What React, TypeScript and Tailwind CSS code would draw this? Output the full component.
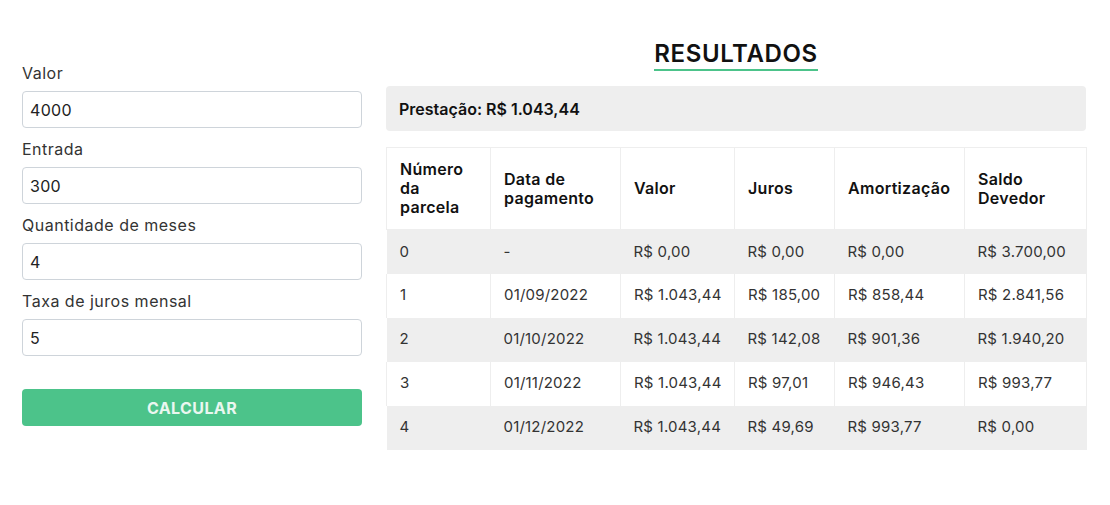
import React from "react";

const rows = [
  ["0", "-", "R$ 0,00", "R$ 0,00", "R$ 0,00", "R$ 3.700,00"],
  ["1", "01/09/2022", "R$ 1.043,44", "R$ 185,00", "R$ 858,44", "R$ 2.841,56"],
  ["2", "01/10/2022", "R$ 1.043,44", "R$ 142,08", "R$ 901,36", "R$ 1.940,20"],
  ["3", "01/11/2022", "R$ 1.043,44", "R$ 97,01", "R$ 946,43", "R$ 993,77"],
  ["4", "01/12/2022", "R$ 1.043,44", "R$ 49,69", "R$ 993,77", "R$ 0,00"],
];

const fields = [
  ["Valor", "4000"],
  ["Entrada", "300"],
  ["Quantidade de meses", "4"],
  ["Taxa de juros mensal", "5"],
];

const widths = ["w-[104px]", "w-[130px]", "w-[114px]", "w-[100px]", "w-[130px]", "w-[122px]"];

export default function App() {
  return (
    <div className="w-[1110px] h-[505px] bg-white text-[#222] font-['Inter',sans-serif] flex gap-[24px] px-[22px] pt-[40px]">
      <div className="w-[340px] flex flex-col pt-[22px]">
        {fields.map(([l, v]) => (
          <div key={l} className="flex flex-col">
            <label className="text-[16px] tracking-[0.5px] leading-[22px] h-[29px] text-[#333]">{l}</label>
            <div className="h-[37px] border border-[#ced4da] rounded-[4px] flex items-center px-[7px] text-[16px] tracking-[0.3px] text-[#222] mb-[10px]">
              {v}
            </div>
          </div>
        ))}
        <button className="mt-[23px] h-[37px] rounded-[4px] bg-[#4cc38a] text-[#eaf7f0] font-bold text-[16px] tracking-[0.4px]">
          CALCULAR
        </button>
      </div>
      <div className="w-[700px] flex flex-col">
        <div className="flex justify-center">
          <h1 className="text-[24px] tracking-[0.6px] leading-[28px] font-semibold text-[#111] border-b-[2px] border-[#4cc38a] pb-[1px] mb-[1px]">
            RESULTADOS
          </h1>
        </div>
        <div className="mt-[14px] h-[45px] bg-[#eeeeee] rounded-[4px] flex items-center px-[13px] text-[16px] font-semibold text-[#111]">
          Prestação: R$ 1.043,44
        </div>
        <table className="mt-[16px] w-[700px] border-collapse text-[15px] table-fixed">
          <thead>
            <tr className="h-[82px] border border-[#eeeeee]">
              {["Número da parcela", "Data de pagamento", "Valor", "Juros", "Amortização", "Saldo Devedor"].map((h, i) => (
                <th key={h} className={`${widths[i]} text-left font-semibold text-[16px] tracking-[0.3px] leading-[19px] px-[13px] border-r border-[#eeeeee] text-[#111] align-middle`}>
                  {h === "Número da parcela" ? (
                    <>Número<br />da<br />parcela</>
                  ) : h === "Data de pagamento" ? (
                    <>Data de<br />pagamento</>
                  ) : h === "Saldo Devedor" ? (
                    <>Saldo<br />Devedor</>
                  ) : (
                    h
                  )}
                </th>
              ))}
            </tr>
          </thead>
          <tbody>
            {rows.map((r, ri) => (
              <tr key={ri} className={`h-[44px] ${ri % 2 === 0 ? "bg-[#eeeeee]" : "bg-white"}`}>
                {r.map((c, ci) => (
                  <td key={ci} className={`px-[13px] whitespace-nowrap tracking-[0.2px] text-[#333] ${ri % 2 === 0 ? "" : "border-r border-[#eeeeee] first:border-l"}`}>
                    {c}
                  </td>
                ))}
              </tr>
            ))}
          </tbody>
        </table>
      </div>
    </div>
  );
}
